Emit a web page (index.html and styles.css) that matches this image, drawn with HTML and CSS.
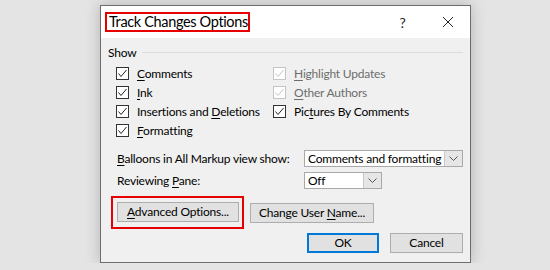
FILE: index.html
```html
<!DOCTYPE html>
<html lang="en">
<head>
  <meta charset="UTF-8" />
  <title>Track Changes Options</title>
  <link rel="stylesheet" href="styles.css">
</head>
<body>
  <div class="dialog">
    <div class="titlebar">
      <div class="title">Track Changes Options</div>
      <div class="title-btn">?</div>
      <div class="title-btn">
        <svg width="12" height="12" viewBox="0 0 12 12"><path d="M1 1L11 11M11 1L1 11" stroke="#222" stroke-width="1" fill="none"/></svg>
      </div>
    </div>
    <div class="content">
      <div class="group-head"><span>Show</span><div class="rule"></div></div>
      <div class="checks">
        <label class="check"><span class="box"><svg viewBox="0 0 11 11"><path d="M1.5 5.5L4 8.5L9.5 2"/></svg></span><span><u>C</u>omments</span></label>
        <label class="check off"><span class="box"><svg viewBox="0 0 11 11"><path d="M1.5 5.5L4 8.5L9.5 2"/></svg></span><span><u>H</u>ighlight Updates</span></label>
        <label class="check"><span class="box"><svg viewBox="0 0 11 11"><path d="M1.5 5.5L4 8.5L9.5 2"/></svg></span><span><u>I</u>nk</span></label>
        <label class="check off"><span class="box"><svg viewBox="0 0 11 11"><path d="M1.5 5.5L4 8.5L9.5 2"/></svg></span><span><u>O</u>ther Authors</span></label>
        <label class="check"><span class="box"><svg viewBox="0 0 11 11"><path d="M1.5 5.5L4 8.5L9.5 2"/></svg></span><span>Insertions and <u>D</u>eletions</span></label>
        <label class="check"><span class="box"><svg viewBox="0 0 11 11"><path d="M1.5 5.5L4 8.5L9.5 2"/></svg></span><span>Pic<u>t</u>ures By Comments</span></label>
        <label class="check"><span class="box"><svg viewBox="0 0 11 11"><path d="M1.5 5.5L4 8.5L9.5 2"/></svg></span><span><u>F</u>ormatting</span></label>
      </div>
      <div class="fields">
        <span><u>B</u>alloons in All Markup view show:</span>
        <div class="select wide"><span class="value">Comments and formatting</span><span class="arrow"><svg width="9" height="5" viewBox="0 0 9 5"><path d="M0.5 0.5L4.5 4.5L8.5 0.5"/></svg></span></div>
        <span>Reviewing <u>P</u>ane:</span>
        <div class="select narrow"><span class="value">Off</span><span class="arrow"><svg width="9" height="5" viewBox="0 0 9 5"><path d="M0.5 0.5L4.5 4.5L8.5 0.5"/></svg></span></div>
      </div>
      <div class="actions">
        <div class="highlight"><button class="btn adv"><u>A</u>dvanced Options...</button></div>
        <button class="btn user">Change User <u>N</u>ame...</button>
      </div>
      <div class="footer">
        <button class="btn ok">OK</button>
        <button class="btn cancel">Cancel</button>
      </div>
    </div>
  </div>
</body>
</html>
```

FILE: styles.css
```css
* { box-sizing: border-box; }
body {
  margin: 0;
  background: #e4e4e4;
  font-family: Lato, sans-serif;
  font-size: 12px;
  letter-spacing: -0.2px;
  color: #000;
}
u { text-decoration-thickness: 1px; text-underline-offset: 2px; }
.dialog {
  width: 371px;
  height: 258px;
  margin: 5px 0 0 100px;
  border: 1px solid #6d6d6d;
  background: #f0f0f0;
  box-shadow: 0 0 14px rgba(0,0,0,0.22);
  display: flex;
  flex-direction: column;
}
.titlebar {
  height: 32px;
  background: #fff;
  display: flex;
  align-items: center;
  padding-left: 4px;
}
.title {
  border: 2px solid #e60000;
  height: 20px;
  width: 145px;
  padding-left: 2px;
  font-size: 14.5px;
  letter-spacing: -0.35px;
  line-height: 16px;
  white-space: nowrap;
  margin-right: auto;
}
.title-btn {
  width: 45px;
  height: 32px;
  display: flex;
  align-items: center;
  justify-content: center;
  font-size: 14px;
  color: #222;
}
.content {
  flex: 1;
  padding: 6px 7px 0 7px;
  display: flex;
  flex-direction: column;
}
.group-head {
  height: 16px;
  display: flex;
  align-items: center;
  gap: 6px;
}
.rule { flex: 1; border-top: 1px solid #dcdcdc; }
.checks {
  margin: 4px 0 0 8px;
  display: grid;
  grid-template-columns: 157px 1fr;
  grid-auto-rows: 19px;
}
.check {
  display: flex;
  align-items: center;
  gap: 8px;
  white-space: nowrap;
}
.box {
  width: 13px;
  height: 13px;
  border: 1px solid #333;
  background: #fff;
  display: flex;
}
.box svg { width: 11px; height: 11px; fill: none; stroke: #222; stroke-width: 1; }
.check.off { color: #6d6d6d; }
.check.off .box { border-color: #c4c4c4; }
.check.off .box svg { stroke: #c4c4c4; }
.fields {
  margin: 10px 0 0 9px;
  display: grid;
  grid-template-columns: 187px 1fr;
  grid-auto-rows: 17px;
  row-gap: 5px;
  align-items: center;
  white-space: nowrap;
}
.select {
  height: 17px;
  border: 1px solid #a9a9a9;
  background: #fff;
  display: flex;
}
.select.wide { width: 159px; }
.select.narrow { width: 78px; }
.select .value { flex: 1; padding-left: 3px; line-height: 15px; overflow: hidden; }
.arrow {
  width: 18px;
  background: #e6e6e6;
  border-left: 1px solid #c8c8c8;
  display: flex;
  align-items: center;
  justify-content: center;
}
.arrow svg { fill: none; stroke: #555; stroke-width: 1; }
.actions {
  margin: 7px 0 0 3px;
  display: flex;
  align-items: center;
  gap: 6px;
}
.highlight {
  border: 2px solid #e60000;
  padding: 4px 3px 5px 4px;
}
.btn {
  height: 20px;
  border: 1px solid #adadad;
  background: #e1e1e1;
  font-family: inherit;
  font-size: 12px;
  letter-spacing: -0.2px;
  color: #000;
  padding: 0;
  line-height: 16px;
}
.adv { width: 122px; }
.user { width: 124px; }
.footer {
  margin-top: 4px;
  display: flex;
  justify-content: flex-end;
  gap: 11px;
}
.ok { width: 72px; border: 2px solid #0078d7; }
.cancel { width: 73px; }
```
